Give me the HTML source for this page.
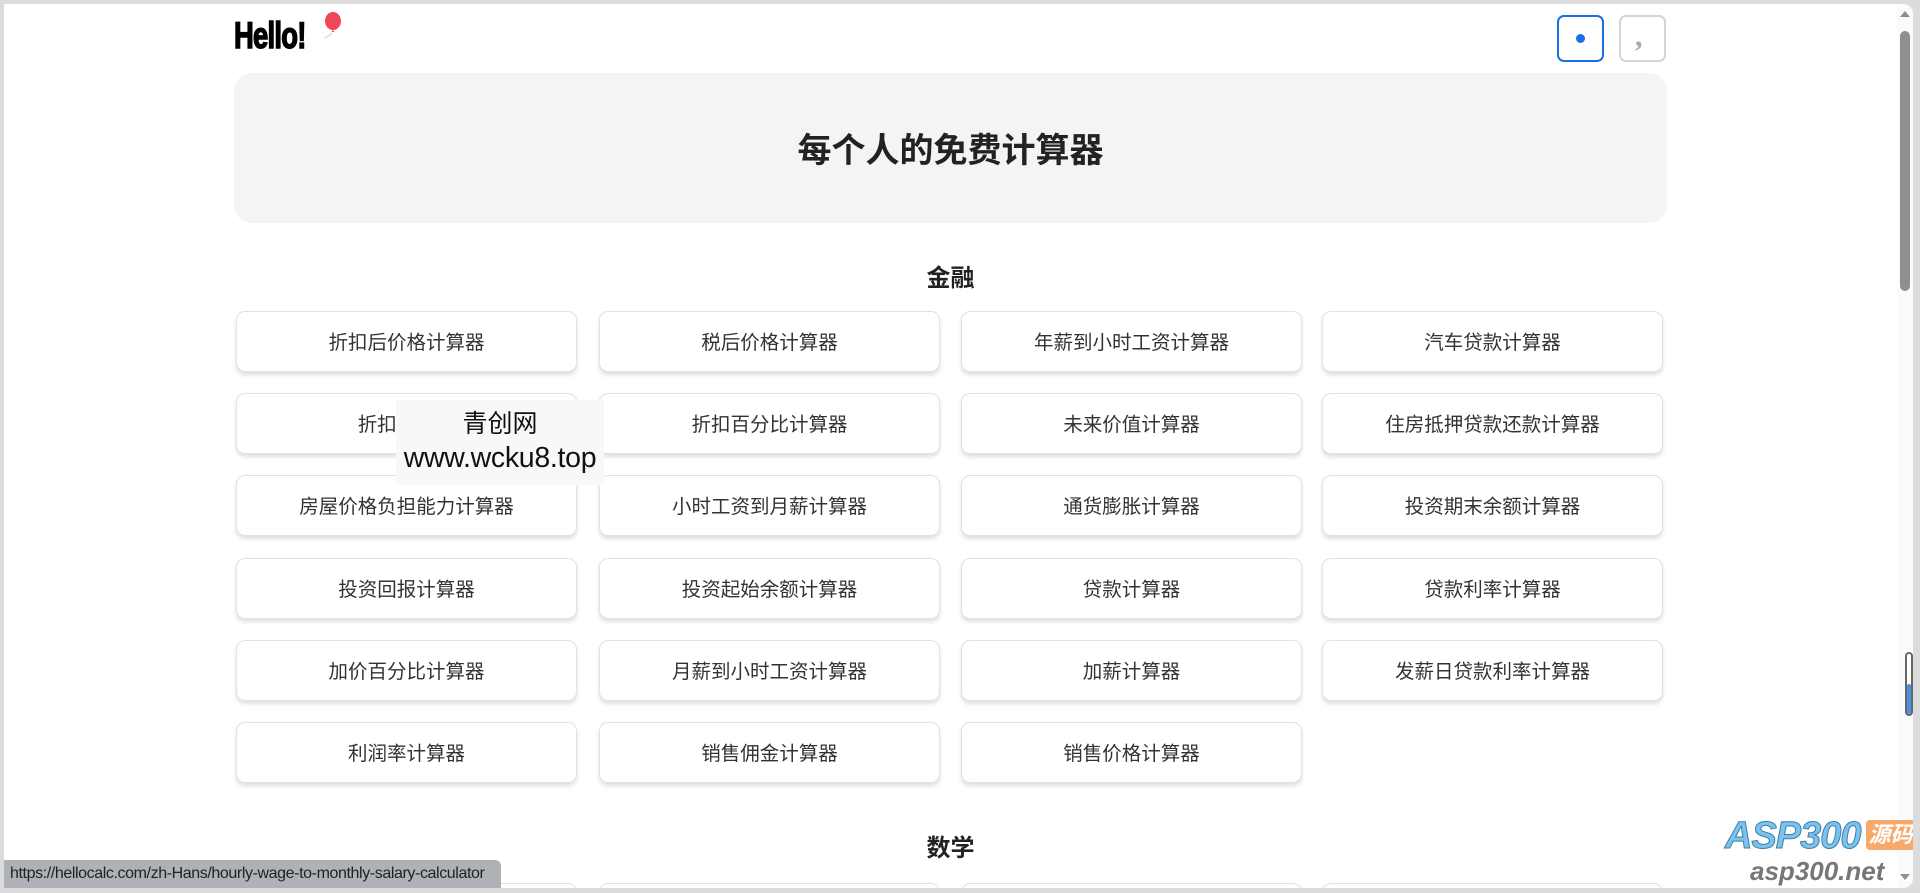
<!DOCTYPE html>
<html><head><meta charset="utf-8"><style>
*{margin:0;padding:0;box-sizing:border-box}
html,body{width:1920px;height:893px;overflow:hidden;background:#dcdcdc;font-family:"Liberation Sans","Noto Sans CJK SC",sans-serif}
#win{position:absolute;left:4px;top:4px;width:1909px;height:884px;background:#fff;border-radius:0 10px 10px 0;overflow:hidden}
.abs{position:absolute}
.logo{left:230px;top:11px;font-weight:bold;font-size:37px;color:#000;transform:scaleX(0.74);transform-origin:left top;letter-spacing:-1px;font-family:"Liberation Sans",sans-serif;-webkit-text-stroke:1.5px #000}
.btn{top:11px;width:47px;height:47px;border-radius:7px;border:2px solid #d4d4d4}
.hero{left:230px;top:69px;width:1433px;height:150px;background:#f4f4f5;border-radius:18px}
.hero h1{position:absolute;left:0;right:0;top:58px;text-align:center;font-size:34px;line-height:40px;color:#222;font-weight:bold}
.sec{left:230px;width:1433px;text-align:center;font-size:24px;font-weight:bold;color:#222;line-height:30px}
.card{width:341px;height:61px;border:1px solid #e2e2e2;border-radius:9px;background:#fff;box-shadow:0 3px 4px rgba(0,0,0,.13);text-align:center;line-height:63px;font-size:19.5px;color:#333}
</style></head><body>
<div id="win">
<div class="abs logo">Hello!</div>
<svg class="abs" style="left:315px;top:7px" width="30" height="32" viewBox="0 0 30 32"><ellipse cx="14" cy="10" rx="8" ry="9" fill="#ef4758"/><path d="M14 19 L12.5 21 L15.5 21 Z" fill="#ef4758"/><path d="M13 22 Q9 26 5 27" stroke="#cfe3e0" stroke-width="1.5" fill="none"/></svg>
<div class="abs btn" style="left:1553px;border-color:#1a6ee6"><div class="abs" style="left:17px;top:17px;width:9px;height:9px;border-radius:50%;background:#1a6ee6"></div></div>
<div class="abs btn" style="left:1615px"><div class="abs" style="left:14px;top:3px;font-size:30px;font-weight:bold;color:#aaa;font-family:'Liberation Serif',serif">,</div></div>
<div class="abs hero"><h1>每个人的免费计算器</h1></div>
<div class="abs sec" style="top:260px">金融</div>
<div id="cards"></div>
<div class="abs sec" style="top:830px">数学</div>
<div class="abs" style="left:392px;top:396px;width:208px;height:85px;background:#f8f8f8;text-align:center;color:#111">
<div style="font-size:25px;line-height:34px;padding-top:7px">青创网</div>
<div style="font-size:28.5px;line-height:34px;letter-spacing:-0.3px">www.wcku8.top</div></div>
<div class="abs" style="left:-4px;top:856px;width:501px;height:30px;background:#aeb1b6;border-radius:0 6px 0 0;font-size:16px;color:#222;line-height:28px;padding-left:10px;letter-spacing:-0.4px;white-space:nowrap;overflow:hidden">https://hellocalc.com/zh-Hans/hourly-wage-to-monthly-salary-calculator</div>
<div class="abs" style="left:1893px;top:0;width:16px;height:884px;background:#fbfbfb"></div>
<div class="abs" style="left:1896px;top:27px;width:10px;height:260px;border-radius:5px;background:#8f8f8f"></div>
<div class="abs" style="left:1896px;top:7px;width:0;height:0;border-left:5px solid transparent;border-right:5px solid transparent;border-bottom:6px solid #8f8f8f"></div>
<div class="abs" style="left:1896px;top:870px;width:0;height:0;border-left:5px solid transparent;border-right:5px solid transparent;border-top:6px solid #8f8f8f"></div>
<div class="abs" style="left:1901px;top:648px;width:8px;height:64px;border:2px solid #666;border-radius:4px;background:#fff"><div style="position:absolute;left:0;right:0;bottom:0;height:30px;background:#4a90e2;border-radius:2px"></div></div>
<div class="abs" style="left:1721px;top:811px;font-size:38px;font-weight:bold;font-style:italic;color:#7cc2ea;-webkit-text-stroke:1px #3a7fb0;letter-spacing:-1px">ASP300</div>
<div class="abs" style="left:1862px;top:816px;width:49px;height:30px;background:#f6a96a;border-radius:4px;color:#fff;font-size:22px;font-weight:bold;font-style:italic;text-align:center;line-height:30px">源码</div>
<div class="abs" style="left:1746px;top:852px;font-size:26px;font-weight:bold;font-style:italic;color:#777">asp300.net</div>
</div>
<script>
var rows=[["折扣后价格计算器","税后价格计算器","年薪到小时工资计算器","汽车贷款计算器"],["折扣计算器","折扣百分比计算器","未来价值计算器","住房抵押贷款还款计算器"],["房屋价格负担能力计算器","小时工资到月薪计算器","通货膨胀计算器","投资期末余额计算器"],["投资回报计算器","投资起始余额计算器","贷款计算器","贷款利率计算器"],["加价百分比计算器","月薪到小时工资计算器","加薪计算器","发薪日贷款利率计算器"],["利润率计算器","销售佣金计算器","销售价格计算器"],["","","",""]];
var xs=[232,595,957,1318],ys=[307,389,471,554,636,718,879],h="";
rows.forEach(function(r,i){r.forEach(function(t,j){h+='<div class="abs card" style="left:'+xs[j]+'px;top:'+ys[i]+'px">'+t+'</div>'})});
document.getElementById("cards").innerHTML=h;
</script>
</body></html>
